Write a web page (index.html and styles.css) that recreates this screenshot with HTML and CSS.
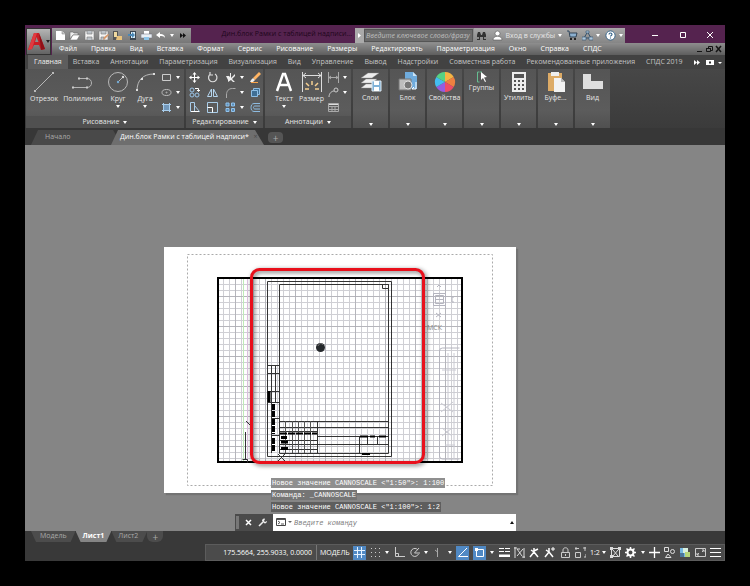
FILE: index.html
```html
<!DOCTYPE html>
<html lang="ru">
<head>
<meta charset="utf-8">
<title>Дин.блок Рамки с таблицей надписи</title>
<link rel="stylesheet" href="styles.css">
</head>
<body>
<div class="app">
  <header class="top">
    <button class="logo" aria-label="Меню приложения">
      <svg width="18" height="20" viewBox="0 0 18 20"><path d="M0 18 6 1h5l6 16-4 1-2-5H6l-2 4z" fill="#c81d25"/><path d="M7 10 8.500 5l2 5z" fill="#8d8d8d"/><path d="M6 1h3L4 17l-4 1z" fill="#e03a40"/><path d="m11 1 6 16-4 1z" fill="#8e1017"/></svg>
      <i class="caret dark"></i>
    </button>
    <div class="bars">
      <div class="titlebar">
        <div class="quick">
          <button aria-label="Создать"><svg class="i11" viewBox="0 0 11 11"><path d="M1 1h6l3 3v6H1z" fill="#fff"/><path d="M7 1v3h3" fill="#ccc" stroke="#777" stroke-width=".5"/></svg></button>
          <button aria-label="Открыть"><svg class="i11" viewBox="0 0 11 11"><path d="M1 9V2h3l1 1h4v2H4z" fill="#eee" stroke="#666" stroke-width=".6"/><path d="M1 10 4 5h7L8 10z" fill="#fff" stroke="#777" stroke-width=".6"/></svg></button>
          <button aria-label="Сохранить"><svg class="i11" viewBox="0 0 11 11"><path d="M1 1h9v9H1z" fill="#f4f4f4" stroke="#777" stroke-width=".6"/><path d="M3 1v3h5V1M3 10V7h5v3" fill="#bcc2c8" stroke="#777" stroke-width=".6"/></svg></button>
          <button aria-label="Сохранить как"><svg class="i11" viewBox="0 0 11 11"><path d="M1 1h9v9H1z" fill="#f4f4f4" stroke="#777" stroke-width=".6"/><path d="M3 1v3h5V1M3 10V7h3v3" fill="#bcc2c8" stroke="#777" stroke-width=".6"/><path d="m5 10 1-3 4-3 1 1-4 4z" fill="#d99a6c"/></svg></button>
          <button aria-label="Открыть с устройства"><svg class="i11" viewBox="0 0 11 11"><path d="M1 1h5v9H1z" fill="#555"/><path d="M2 2h3v5H2z" fill="#f0d9a0"/><path d="M5 6h5v4H4z" fill="#e9c27c"/></svg></button>
          <button aria-label="Сохранить на устройстве"><svg class="i11" viewBox="0 0 11 11"><path d="M3 1h6v9H3z" fill="#3b4650"/><path d="M4 2h4v6H4z" fill="#d8ecf7"/><path d="M1 4h4V2l3 3-3 3V6H1z" fill="#4a87b5"/></svg></button>
          <button aria-label="Печать"><svg class="i11" viewBox="0 0 11 11"><path d="M3 1h5v3H3z" fill="#fff"/><path d="M0 4h11v4H0z" fill="#e8eef3" stroke="#667" stroke-width=".5"/><path d="M3 7h5v3H3z" fill="#8ec5e8"/></svg></button>
          <button aria-label="Отменить"><svg class="i11" viewBox="0 0 11 11"><path d="m1 5 4-3v2c3 0 5 1 5 4-1-2-3-2-5-2v2z" fill="#fff"/></svg></button>
          <i class="caret"></i>
          <button aria-label="Ещё"><svg class="i11" viewBox="0 0 11 11"><path d="M3 3v5l3-2.500zM6 3v5l3-2.500z" fill="#111"/></svg></button>
        </div>
        <div class="doc-title">Дин.блок Рамки с таблицей надписи...</div>
        <div class="search">
          <span class="play"><svg width="5" height="7" viewBox="0 0 5 7"><path d="M1 1v5l3-2.500z" fill="#fff"/></svg></span>
          <input type="text" aria-label="Поиск" placeholder="Введите ключевое слово/фразу">
          <div class="account">
            <button aria-label="Найти"><svg class="i11" viewBox="0 0 11 11"><path d="M1 10V5l1-3h2l1 3h1l1-3h2l1 3v5H7V7H4v3z" fill="#333"/><path d="M2 7v2M9 7v2" stroke="#ddd"/></svg></button>
            <button><svg class="i11" viewBox="0 0 11 11"><circle cx="5.500" cy="3.500" r="2.500" fill="#fff" stroke="#555" stroke-width=".6"/><path d="M1 10c0-5 9-5 9 0z" fill="#fff" stroke="#555" stroke-width=".6"/></svg><span>Вход в службы</span><i class="caret"></i></button>
            <button aria-label="Магазин"><svg class="i11" viewBox="0 0 11 11"><path d="M0 1h2l1 6h6l1-4H3" fill="#8cb0cf" stroke="#26384a" stroke-width=".9"/><circle cx="4" cy="9" r="1"/><circle cx="8" cy="9" r="1"/></svg></button>
            <button aria-label="Приложения"><svg class="i11" viewBox="0 0 11 11"><path d="M5.500 2 2 8h7z" fill="none" stroke="#34536f"/><path d="M4 1h3v2H4zM0 7h4v3H0zM7 7h4v3H7z" fill="#adc6da" stroke="#34536f" stroke-width=".6"/></svg><i class="caret"></i></button>
            <button aria-label="Справка"><svg class="i11" viewBox="0 0 11 11"><circle cx="5.500" cy="5.500" r="4.600" fill="#fff" stroke="#2e5f86" stroke-width=".9"/><path d="M4 4.500c0-2 3-2 3 0 0 1-1.500 1-1.500 2M5.500 7.500v1" fill="none" stroke="#2e5f86" stroke-width="1.100"/></svg><i class="caret"></i></button>
          </div>
        </div>
        <div class="wincontrols">
          <button aria-label="Свернуть"><svg width="8" height="8" viewBox="0 0 8 8"><path d="M1 4.500h6" stroke="#fff"/></svg></button>
          <button aria-label="Развернуть"><svg width="8" height="8" viewBox="0 0 8 8"><path d="M1.500 1.500h5v5h-5z" fill="none" stroke="#fff"/></svg></button>
          <button aria-label="Закрыть"><svg width="8" height="8" viewBox="0 0 8 8"><path d="m1 1 6 6M7 1 1 7" stroke="#fff"/></svg></button>
        </div>
      </div>
      <nav class="menubar">
        <a href="#">Файл</a><a href="#">Правка</a><a href="#">Вид</a><a href="#">Вставка</a><a href="#">Формат</a><a href="#">Сервис</a><a href="#">Рисование</a><a href="#">Размеры</a><a href="#">Редактировать</a><a href="#">Параметризация</a><a href="#">Окно</a><a href="#">Справка</a><a href="#">СПДС</a>
        <svg class="mdi" width="26" height="8" viewBox="0 0 26 8" fill="none" stroke="#151515"><path d="M1 6.500h5M12.500 3V1.500h4v4H15M10.500 3.500h4v3h-4zM10 3.500h5" /><path d="m20 1 5 6M25 1l-5 6" stroke-width="1.500"/></svg>
      </nav>
    </div>
  </header>

  <nav class="ribbon-tabs">
    <a href="#" class="on">Главная</a><a href="#">Вставка</a><a href="#">Аннотации</a><a href="#">Параметризация</a><a href="#">Визуализация</a><a href="#">Вид</a><a href="#">Управление</a><a href="#">Вывод</a><a href="#">Надстройки</a><a href="#">Совместная работа</a><a href="#">Рекомендованные приложения</a><a href="#">СПДС 2019</a>
    <svg class="more" width="28" height="7" viewBox="0 0 28 7" fill="#fff"><path d="M0 1v5l3-2.500zM3 1v5l3-2.500zM12 1h8v5h-8zM24 3h4l-2 2z"/><path d="M15 2.500h2v2h-2z" fill="#333"/></svg>
  </nav>

  <div class="ribbon">
    <section class="panel draw">
      <div class="tools">
        <button class="big"><svg class="i22" viewBox="0 0 22 22" fill="none" stroke="#b8b8b8"><path d="M2 20 20 2"/><path d="M1 19h2v2H1zM19 1h2v2h-2z" fill="#bbb" stroke="none"/></svg>Отрезок</button>
        <button class="big"><svg class="i22" viewBox="0 0 22 22" fill="none" stroke="#b4b4b4"><path d="M1 16.500h14c6 0 6-9 0-9H7"/><path d="M0 15.500h2v2H0zM14 15.500h2v2h-2zM6 6.500h2v2H6zM14 6.500h2v2h-2z" fill="#ccc" stroke="none"/></svg>Полилиния</button>
        <button class="big"><svg class="i22" viewBox="0 0 22 22" fill="none" stroke="#b8b8b8"><circle cx="11" cy="11" r="9.500"/><path d="m11 11 5-5"/><circle cx="11" cy="11" r="1.200" fill="#74a8d0" stroke="none"/><circle cx="16" cy="6" r="1.200" fill="#ddd" stroke="none"/></svg>Круг<i class="caret"></i></button>
        <button class="big"><svg class="i22" viewBox="0 0 22 22" fill="none" stroke="#b8b8b8"><path d="M3 20C3 9 9 3 20 3"/><path d="M2 18h2v2H2zM7 7h2v2H7zM19 2h2v2h-2z" fill="#ddd" stroke="none"/></svg>Дуга<i class="caret"></i></button>
        <div class="mini one">
          <button aria-label="Прямоугольник"><svg class="i11" viewBox="0 0 11 11" fill="none" stroke="#ccc"><path d="M1.500 2.500h8v6h-8z"/></svg><i class="caret"></i></button>
          <button aria-label="Эллипс"><svg class="i11" viewBox="0 0 11 11" fill="none" stroke="#bbb"><ellipse cx="5.500" cy="5.500" rx="4.500" ry="3"/><circle cx="5.500" cy="5.500" r=".5"/></svg><i class="caret"></i></button>
          <button aria-label="Штриховка"><svg class="i11" viewBox="0 0 11 11" fill="#7298bb" stroke="#a8cdec"><path d="M2.500 2.500h6v6h-6zM1 2.500h9M1 8.500h9M2.500 1v9M8.500 1v9"/></svg><i class="caret"></i></button>
        </div>
      </div>
      <h2>Рисование <i class="caret"></i></h2>
    </section>

    <section class="panel edit">
      <div class="tools">
        <div class="mini four">
          <button aria-label="Перенести"><svg class="i11" viewBox="0 0 11 11" fill="#fff"><path d="M5 2h1v3h3v1H6v3H5V6H2V5h3z"/><path d="m5.500 0 2 2.500h-4zM5.500 11l2-2.500h-4zM0 5.500l2.500-2v4zM11 5.500l-2.500-2v4z"/></svg></button>
          <button aria-label="Повернуть"><svg class="i11" viewBox="0 0 11 11" fill="none" stroke="#ddd" stroke-width="1.200"><path d="M3.500 2a4.200 4.200 0 1 0 4.500 0M3 0v3h3"/></svg></button>
          <button aria-label="Обрезать"><svg class="i11" viewBox="0 0 11 11"><path d="m1 1 4 4V1h1v5l4-4v2L7 7l3 3H8L6 8l-3 2V8L1 4h3z" fill="#eee"/></svg><i class="caret"></i></button>
          <button aria-label="Стереть"><svg class="i11" viewBox="0 0 11 11"><path d="m3 6 6-6 2 2-6 6z" fill="#ffb463"/><path d="m1 8 2-2 2 2-2 2H0z" fill="#eee"/><path d="M1 10.500h7" stroke="#f9a349"/></svg></button>
          <button aria-label="Копировать"><svg class="i11" viewBox="0 0 11 11" fill="none" stroke="#9ac4e8"><circle cx="3" cy="3" r="2"/><circle cx="3" cy="8" r="2"/><circle cx="8" cy="8" r="2"/><path d="M6 1.500h3.500V4M8 3l1.500 1.500L11 3" stroke="#fff"/></svg></button>
          <button aria-label="Зеркало"><svg class="i11" viewBox="0 0 11 11" fill="none" stroke="#b5d5ee"><path d="M4.500 2v7.500h-4zM6.500 2v7.500h4z"/></svg></button>
          <button aria-label="Сопряжение"><svg class="i11" viewBox="0 0 11 11" fill="none" stroke="#aaa"><path d="M1.500 11V8c0-4 2-6.500 6-6.500h3"/></svg><i class="caret"></i></button>
          <button aria-label="Расчленить"><svg class="i11" viewBox="0 0 11 11" fill="#3f6e94" stroke="#8dbde4"><path d="M1.500 3.500h6v6h-6zM3.500 3V1.500h6v6H8"/></svg></button>
          <button aria-label="Растянуть"><svg class="i11" viewBox="0 0 11 11" fill="none" stroke="#a9cdea"><path d="M1.500.5h4v9h-4zM5.500 9.500h5l-5-6" /><path d="M2 9.500h8" stroke="#fff"/></svg></button>
          <button aria-label="Масштаб"><svg class="i11" viewBox="0 0 11 11" fill="none" stroke="#aacde8"><path d="M.5.500h10v10H.5z"/><path d="M.5 5.500h5v5" stroke="#fff"/></svg></button>
          <button aria-label="Массив"><svg class="i11" viewBox="0 0 11 11" fill="#5b8db8" stroke="#91c3ed"><path d="M1 1h3v3H1zM6.500 1h3v3h-3zM1 6.500h3v3H1zM6.500 6.500h3v3h-3z"/></svg><i class="caret"></i></button>
          <button aria-label="Подобие"><svg class="i11" viewBox="0 0 11 11" fill="none" stroke="#8dbbe0"><path d="M10 1.500H4c-4 0-4 8 0 8h6M10 4H5c-2 0-2 3 0 3h5"/></svg></button>
        </div>
      </div>
      <h2>Редактирование <i class="caret"></i></h2>
    </section>

    <section class="panel note">
      <div class="tools">
        <button class="big"><svg class="i22" viewBox="0 0 22 22" fill="none" stroke="#fff" stroke-width="2.500"><path d="m4 20 6-17h2l6 17M7 14h8"/></svg>Текст<i class="caret"></i></button>
        <button class="big"><svg class="i22" viewBox="0 0 22 22" fill="none" stroke="#ddd"><path d="M1.500 1v20M20.500 1v20M2 4.500h18M5 2 2 4.500 5 7M17 2l3 2.500L17 7"/><path d="M8 18H4M8 15l-3-3M11 14v-4M14 15l3-3M14 18h4" stroke="#f5cf91" stroke-width="1.500"/></svg>Размер</button>
        <div class="mini one">
          <button aria-label="Линейный"><svg class="i11" viewBox="0 0 11 11" fill="none" stroke="#aaa"><path d="M.5 0v11M10.500 0v11M1 5.500h9M3 4 1 5.500 3 7M8 4l2 1.500L8 7"/></svg><i class="caret"></i></button>
          <button aria-label="Выноска"><svg class="i11" viewBox="0 0 11 11" fill="none" stroke="#ccc"><path d="M1 10c0-4 3-6 5-6"/><circle cx="8" cy="3" r="2"/></svg><i class="caret"></i></button>
          <button aria-label="Таблица"><svg class="i11" viewBox="0 0 11 11" fill="none" stroke="#aaa"><path d="M.5 1.500h10v8H.5zM.5 4.500h10M.5 7.500h10M4 4v6M7 4v6"/><path d="M1 2.500h9" stroke="#ddd"/></svg></button>
        </div>
      </div>
      <h2>Аннотации <i class="caret"></i></h2>
    </section>

    <button class="group"><svg class="i22" viewBox="0 0 22 22"><path d="m1 7 7-5h11l-7 5zM1 12l5-4h11l-5 4zM1 17l5-4h10l-4 4z" fill="#eee" stroke="#888" stroke-width=".4"/><path d="M12 10h9v10h-9z" fill="#7fb2d8" stroke="#dfeaf2"/><path d="M14 10h5v4h-5zM14 16h5v4h-5z" fill="#fff"/></svg><span>Слои</span><i class="caret"></i></button>
    <button class="group"><svg class="i22" viewBox="0 0 22 22"><path d="M8 1h8l4 4v13H8z" fill="#6fabdc"/><path d="M16 1v4h4" fill="#cde4f5"/><path d="M2 8h12v11H2z" fill="#bdbdbd" stroke="#777"/><circle cx="11" cy="14" r="4" fill="#777" stroke="#ddd"/><path d="M19 11v7h-4l2-2" fill="none" stroke="#fff"/></svg><span>Блок</span><i class="caret"></i></button>
    <button class="group"><svg class="i22" viewBox="0 0 22 22"><path d="M11 11V1a10 10 0 0 1 8.700 5z" fill="#f6b443"/><path d="m11 11 8.700-5a10 10 0 0 1 0 10z" fill="#ef8040"/><path d="m11 11 8.700 5a10 10 0 0 1-8.700 5z" fill="#ee4c67"/><path d="M11 11v10a10 10 0 0 1-8.700-5z" fill="#955ce0"/><path d="m11 11-8.700 5a10 10 0 0 1 0-10z" fill="#43bdf1"/><path d="M11 11 2.300 6A10 10 0 0 1 11 1z" fill="#55d184"/></svg><span>Свойства</span><i class="caret"></i></button>
    <button class="group low"><svg width="12" height="12" viewBox="0 0 12 12"><path d="M3.500 1H1.500v10h2M6 1H4" fill="none" stroke="#65bd91"/><path d="m5 1 6 5-3 .5 2 4-1 .5-2-4-2 2z" fill="#fff"/></svg><span>Группы</span><i class="caret"></i></button>
    <button class="group"><svg class="i22" viewBox="0 0 22 22"><path d="M4 1h14v20H4z" fill="#eee"/><path d="M6 3h10v4H6zM6 9h2v2H6zM10 9h2v2h-2zM14 9h2v2h-2zM6 13h2v2H6zM10 13h2v2h-2zM14 13h2v2h-2zM6 17h2v2H6zM10 17h2v2h-2zM14 17h2v2h-2z" fill="#555"/></svg><span>Утилиты</span><i class="caret"></i></button>
    <button class="group"><svg class="i22" viewBox="0 0 22 22"><path d="M3 2h14v18H3z" fill="#ddab66"/><path d="M6 1h8v4H6z" fill="#eee"/><path d="M9 7h7l4 4v10H9z" fill="#f2f2f2"/><path d="M16 7v4h4" fill="#bbb"/></svg><span>Буфе...</span><i class="caret"></i></button>
    <button class="group"><svg class="i22" viewBox="0 0 22 22"><path d="M1 3h8v7h12v8H1z" fill="#dedede"/></svg><span>Вид</span><i class="caret"></i></button>
  </div>

  <nav class="file-tabs">
    <a href="#" class="start">Начало</a>
    <a href="#" class="on">Дин.блок Рамки с таблицей надписи* <span>×</span></a>
    <button aria-label="Новый чертёж">+</button>
  </nav>

  <main class="workspace">
    <svg class="paper" width="352" height="246" viewBox="164 247 352 246">
      <defs>
        <pattern id="grid" x="218" y="279" width="6" height="6" patternUnits="userSpaceOnUse"><path d="M5.500 0v6M0 5.500h6" stroke="#cfcfd4"/></pattern>
        <pattern id="major" x="218" y="279" width="30" height="30" patternUnits="userSpaceOnUse"><path d="M17.500 0v30M0 17.500h30" stroke="#a9a9b0" stroke-width=".7"/></pattern>
        <filter id="shade" x="-10%" y="-10%" width="120%" height="120%"><feGaussianBlur stdDeviation="2"/></filter>
      </defs>
      <path d="M164 247h352v246H164z" fill="#fff"/>
      <path d="M187.500 254.500h305v231h-305z" fill="none" stroke="#aaa" stroke-dasharray="2 2"/>
      <path d="M218 278h244v184H218z" fill="url(#grid)"/>
      <path d="M218 278h244v184H218z" fill="url(#major)"/>
      <path d="M243.500 279v182" stroke="#bfe9b8"/><path d="M247.500 279v182" stroke="#dfc4e2"/>
      <path d="M218 278h244v184H218z" fill="none" stroke="#000" stroke-width="2"/>
      <g fill="none" stroke="#333">
        <path d="M267.500 281.500h124v175h-124zM279.500 284.500h109v169h-109zM382.500 284.500h6v4h-6z"/>
        <path d="M267.500 365.500h12M267.500 373.500h12M267.500 391.500h12M267.500 402.500h12M271.500 365v88M275.500 365v37M272 418.500h7M272 435.500h7"/>
        <path d="M279 421.500h110M279 427.500h110M279 431.500h38M317 436.500h72M279 440.500h38M279 444.500h38M279 449.500h38M317.500 421v32M317 444.500h72M359.500 436v17M367.500 436v8M377.500 436v8"/>
        <path d="M285.500 421v32M292.500 421v32M298.500 421v32M304.500 421v32M310.500 421v32" stroke="#555"/>
        <path d="M245.500 432v28M242.500 459.500h5v3M246 421l5 5M251 426v5M278 454l7 7M285 454l-7 7"/>
      </g>
      <g stroke="#000" fill="none">
        <path d="M269 391v11" stroke-width="3"/>
        <path d="M273.500 404v13M273.500 419v15M273.500 438v14" stroke-width="3" stroke-dasharray="6 1"/>
        <path d="M280 433.500h37" stroke-width="2" stroke-dasharray="7 1"/>
        <path d="M281 437.500h6M281 442h7M281 448.500h7" stroke-width="3"/>
        <path d="M360 436.500h8M370 436.500h5M379 436.500h7M362 454h8" stroke-width="2"/>
      </g>
      <circle cx="320.500" cy="347.500" r="4.500" fill="#26292c"/><path d="M318 346c1-3 4-3 5-1" stroke="#777" fill="none"/>
      <g fill="none" stroke="#b4b4be">
        <path d="M433.500 293.500h12v12h-12zM435.500 295.500h8v8h-8zM436 299.500h7"/>
        <path d="m437 287 2-2 2 2M454 297h-2v5h2M436 313l5 4M441 313l-5 4"/>
        <path d="M439.500 351v105q0 3 3 3h17M439.500 351q0-3 3-3h17"/>
        <path d="M442 370h14M448 353v106M454 353v106M441 403l12 9M453 402l-12 10M442 428l10 8M452 428l-10 8M445 445h10" stroke="#cacad2"/>
      </g>
      <text class="wcs" x="427" y="330">МСК</text>
      <rect x="253" y="271" width="172" height="193" rx="8" fill="none" stroke="#000" stroke-opacity=".45" stroke-width="4" filter="url(#shade)"/>
      <rect x="251.500" y="269.500" width="172" height="193" rx="8" fill="none" stroke="#e90f1b" stroke-width="3"/>
    </svg>
    <div class="command">
      <div class="history">
        <p>Новое значение CANNOSCALE &lt;"1:50"&gt;: 1:100</p>
        <p>Команда: _CANNOSCALE</p>
        <p>Новое значение CANNOSCALE &lt;"1:100"&gt;: 1:2</p>
      </div>
      <div class="cmdline">
        <span class="grip"></span>
        <button aria-label="Закрыть"><svg width="7" height="7" viewBox="0 0 7 7"><path d="m1 1 5 5M6 1 1 6" stroke="#fff" stroke-width="1.500"/></svg></button>
        <button aria-label="Настройка"><svg width="9" height="9" viewBox="0 0 9 9"><path d="m1 8 4-4" stroke="#eee" stroke-width="1.600"/><path d="M4 3c0-2 2-3 3-2L6 3l1 1 2-1c0 2-2 3-3 2z" fill="#eee"/></svg></button>
        <div class="entry">
          <svg width="16" height="9" viewBox="0 0 16 9"><path d="M.5.500h9v7h-9z" fill="#fff" stroke="#444"/><path d="M.5 1.500h9M2 3l2 1.500L2 6M5 6h3" fill="none" stroke="#555"/><path d="M12 3h4l-2 2z" fill="#666"/></svg>
          <input type="text" aria-label="Команда" placeholder="Введите команду">
          <i class="caret up"></i>
        </div>
      </div>
    </div>
  </main>

  <nav class="sheets">
    <a href="#">Модель</a><a href="#" class="on">Лист1</a><a href="#">Лист2</a><button aria-label="Новый лист">+</button>
  </nav>

  <footer class="status">
    <span class="coords">175.5664, 255.9033, 0.0000</span>
    <button class="model">МОДЕЛЬ</button>
    <div class="toggles">
      <button class="lit" aria-label="Сетка"><svg class="i11" viewBox="0 0 11 11"><path d="M3.500 0v11M7.500 0v11M0 3.500h11M0 7.500h11" stroke="#e5f2ff"/></svg></button>
      <button aria-label="Шаг"><svg class="i11" viewBox="0 0 11 11" fill="none" stroke="#ccc" stroke-dasharray="1 3"><path d="M1 1.500h9M1 5.500h9M1 9.500h9"/></svg></button>
      <i class="caret"></i>
      <button aria-label="Орто"><svg class="i11" viewBox="0 0 11 11" fill="none" stroke="#ccc"><path d="M1.500 0v9.500H11M1 6.500h3.500V10"/></svg></button>
      <button aria-label="Полярное отслеживание"><svg class="i11" viewBox="0 0 11 11" fill="none" stroke="#ccc"><path d="M9 3a4 4 0 1 0 .5 4M5.500 6 10 1M5.500 6H11"/></svg></button>
      <i class="caret"></i>
      <button aria-label="Изометрия"><svg class="i11" viewBox="0 0 11 11" fill="none" stroke="#aaa"><path d="M5.500 1v9M3 3l2.500 2"/></svg></button>
      <i class="caret"></i>
      <button class="lit" aria-label="Отслеживание"><svg class="i11" viewBox="0 0 11 11" fill="none" stroke="#fff"><path d="M10 1 1.500 9.500H11"/></svg></button>
      <button class="lit" aria-label="Привязка"><svg class="i11" viewBox="0 0 11 11" fill="none" stroke="#fff"><path d="M2.500 2.500h7v7h-7z"/><path d="M1 1h3v3H1z" fill="#fff" stroke="none"/></svg></button>
      <i class="caret"></i>
      <button aria-label="Вес линий"><svg class="i11" viewBox="0 0 11 11" stroke="#fff"><path d="M0 1.500h5M6 1.500h5M0 4.500h5M6 4.500h5M0 8h11" /><path d="M0 9h11" stroke-width="2"/></svg></button>
      <button aria-label="Выбор"><svg class="i11" viewBox="0 0 11 11" fill="none" stroke="#ddd"><path d="M0 1h3M1 0v11M8 10h3M10 1v10M3 2l5 7M9 2 3 9M3 2h3"/></svg></button>
      <button aria-label="Аннотации"><svg class="i11" viewBox="0 0 11 11" stroke="#fff" stroke-width="1.500" fill="none"><path d="M5 1v4L1 10M5 5l4 5M5 4l4-2M5 5 2 3"/></svg></button>
      <button aria-label="Автомасштаб"><svg class="i11" viewBox="0 0 11 11" stroke="#fff" stroke-width="1.500" fill="none"><path d="M5 1v4L1 10M5 5l4 5M5 5 2 3"/><path d="M7 2h4M9 0v4" stroke-width="1"/></svg></button>
      <button aria-label="Блокировка"><svg class="i11" viewBox="0 0 11 11" fill="none" stroke="#ccc"><path d="M1.500 5.500h8v5h-8zM3 5V3c0-3 5-3 5 0v2M5.500 7v2"/></svg></button>
      <button aria-label="Видовой экран"><svg class="i11" viewBox="0 0 11 11" fill="none" stroke="#ccc"><path d="M1 0v3M0 1.500h4M.5 5.500h5v5h-5zM8 1h3M10 0v4M9 10h2V7"/></svg></button>
      <button class="scale">1:2<i class="caret"></i></button>
      <button aria-label="Синхронизация"><svg class="i11" viewBox="0 0 11 11" fill="none" stroke="#ddd"><path d="M1.500 1.500h8v8h-8zM3 3l5 6M8 3 3 9"/><path d="M0 0h3v3H0zM8 0h3v3H8zM0 8h3v3H0z" fill="#ddd" stroke="none"/></svg></button>
      <button aria-label="Параметры"><svg class="i11" viewBox="0 0 11 11" fill="none" stroke="#fff"><circle cx="5.500" cy="5.500" r="3" stroke-width="2"/><path d="M5.500 0v2M5.500 9v2M0 5.500h2M9 5.500h2M1.500 1.500 3 3M8 8l1.500 1.500M9.500 1.500 8 3M3 8 1.500 9.500" stroke-width="1.500"/></svg></button>
      <i class="caret"></i>
      <button aria-label="Монитор аннотаций"><svg class="i11" viewBox="0 0 11 11" stroke="#fff"><path d="M5.500 0v11M0 5.500h11" stroke-width="1.300"/></svg></button>
      <button aria-label="Изоляция"><svg class="i11" viewBox="0 0 11 11" fill="none" stroke="#ddd"><path d="M.5.500h4v4h-4z"/><circle cx="8.500" cy="4.500" r="2"/><path d="m4 7 3 3.500H1.500z"/></svg></button>
      <button aria-label="Графика"><svg class="i11" viewBox="0 0 11 11"><path d="M1 1h8v9H1z" fill="#76b9e2"/><path d="M4 1h5v5H4z" fill="#d9f1e0"/><path d="M6 5h5v5H6z" fill="#b7d77b"/><path d="M1 6h4v4H1z" fill="#4c779b"/></svg></button>
      <button aria-label="Очистить экран"><svg class="i11" viewBox="0 0 11 11" fill="none" stroke="#ccc"><path d="M.5 1.500h10v8H.5zM2 8l2-2M9 3 7 5M7 3h2v2M2 6v2h2"/></svg></button>
      <button aria-label="Адаптация"><svg class="i11" viewBox="0 0 11 11" stroke="#fff"><path d="M0 1.500h11M0 5.500h11M0 9.500h11"/></svg></button>
    </div>
  </footer>
</div>
</body>
</html>
```
FILE: styles.css
```css
* { box-sizing: border-box; }
body {
  margin: 0;
  padding: 25px;
  min-height: 100vh;
  background: #000;
  color: #e6e6e6;
  font: 7px/10px "Open Sans", "Noto Sans", sans-serif;
}
a { color: inherit; text-decoration: none; white-space: nowrap; }
button {
  display: flex;
  align-items: center;
  justify-content: center;
  padding: 0;
  border: 0;
  background: none;
  color: inherit;
  font: inherit;
}
svg { display: block; flex: none; }
.i11 { width: 11px; height: 11px; }
.i22 { width: 22px; height: 22px; }
.caret {
  flex: none;
  border: 2px solid transparent;
  border-top: 3px solid #fff;
  border-bottom: 0;
}
.caret.dark { border-top-color: #222; }
.caret.up { border-top: 0; border-bottom: 3px solid #111; }

.app { display: flex; flex-direction: column; min-height: calc(100vh - 50px); background: #393939; }

/* title and menu */
.top { display: flex; background: #55234f; }
.logo {
  width: 25px;
  margin: 3px 1px 0 1px;
  border: 1px solid #333;
  background: linear-gradient(#b4b4b4, #636363);
}
.bars { flex: 1; min-width: 0; }
.titlebar { display: flex; align-items: stretch; height: 18px; padding-top: 3px; }
.quick {
  display: flex;
  align-items: center;
  justify-content: space-between;
  width: 139px;
  padding: 0 3px;
  background: linear-gradient(#9a9a9a, #777);
}
.doc-title { flex: 1; padding: 1px 3px 0 0; color: #1e061b; text-align: right; white-space: nowrap; }
.search { display: flex; width: 270px; background: #8b8b8b; }
.play { display: flex; align-items: center; width: 9px; padding-left: 2px; background: #aaa; }
.search input {
  width: 109px;
  margin: 1px 1px 1px 0;
  padding: 0 1px;
  border: 1px solid #555;
  background: #6b6b6b;
  font: italic 7px/10px "Open Sans", sans-serif;
}
.search input::placeholder { color: #bebebe; opacity: 1; }
.account {
  flex: 1;
  display: flex;
  align-items: center;
  justify-content: space-between;
  padding: 0 2px;
  background: linear-gradient(#a9a9a9, #858585);
}
.account button { gap: 3px; white-space: nowrap; }
.wincontrols { display: flex; justify-content: space-between; width: 100px; padding: 0 11px 2px 26px; }
.menubar {
  display: flex;
  align-items: center;
  gap: 14px;
  height: 12px;
  padding: 0 3px 0 7px;
  background: linear-gradient(#8e8e8e, #5e5e5e);
  color: #fff;
}
.mdi { margin-left: auto; }

/* ribbon */
.ribbon-tabs { display: flex; align-items: center; gap: 11px; height: 14px; padding-right: 11px; background: #424242; color: #c4c4c4; }
.ribbon-tabs .on { margin: 0 -6px 0 3px; padding: 2px 6px; background: #5d5d5d; color: #eee; }
.more { margin-left: auto; }
.ribbon {
  display: flex;
  gap: 2px;
  height: 59px;
  padding-left: 1px;
  background: linear-gradient(#474747, #3b3b3b);
}
.panel, .group { background: linear-gradient(#555, #5c5c5c 70%, #505050); }
.panel { display: flex; flex-direction: column; justify-content: space-between; }
.panel h2 {
  display: flex;
  align-items: center;
  justify-content: center;
  gap: 4px;
  height: 12px;
  margin: 0;
  font: inherit;
  background: #505050;
}
.tools { display: flex; align-items: flex-start; padding-top: 2px; }
.big { flex-direction: column; gap: 1px; }
.draw { width: 158px; }
.edit { width: 77px; }
.note { width: 86px; }
.draw .tools { justify-content: space-between; padding-left: 4px; padding-right: 4px; }
.note .tools { justify-content: space-between; padding-left: 8px; padding-right: 4px; }
.mini { display: grid; row-gap: 4px; padding-top: 1px; }
.mini button { gap: 4px; justify-content: flex-start; }
.edit .tools { padding-left: 3px; }
.four { grid-template-columns: 18px 18px 25px 11px; }
.group {
  flex-direction: column;
  justify-content: flex-start;
  width: 35px;
  padding: 2px 0;
}
.group .caret { margin-top: auto; }

/* drawing tabs */
.file-tabs { display: flex; align-items: flex-end; height: 17px; background: #373737; color: #aaa; line-height: 14px; }
.file-tabs a { height: 15px; clip-path: polygon(7px 0, calc(100% - 9px) 0, 100% 100%, 0 100%); }
.file-tabs .start { width: 91px; margin-left: 6px; padding-left: 14px; background: #494949; }
.file-tabs .on { width: 153px; margin-left: -11px; padding-left: 9px; background: #6e6e6e; color: #fff; }
.file-tabs span { padding-left: 3px; color: #4a4a4a; }
.file-tabs button { width: 15px; height: 11px; margin: 0 0 2px 4px; border-radius: 4px; background: #555; font-size: 10px; }

.workspace { position: relative; flex: 1; min-height: 386px; padding: 102px 0 0 139px; background: #858585; }
.paper { box-shadow: 2px 2px 1px #737373; }
.wcs { fill: #888; font: 7px "Open Sans", sans-serif; }

/* command window floats over the sheet */
.command { position: absolute; left: 210px; bottom: 0; width: 281px; font: 7px/10px "Liberation Mono", monospace; }
.history { display: flex; flex-direction: column; align-items: flex-start; gap: 2px; padding: 0 0 2px 36px; }
.history p { margin: 0; padding: 0 1px; background: #757575; color: #fff; white-space: nowrap; }
.history p:first-child { background: #8f8f8f; }
.history p:last-child { background: #5e5e5e; }
.cmdline { display: flex; align-items: center; gap: 6px; height: 17px; background: #4a4a4a; }
.grip { width: 3px; height: 13px; margin-left: 1px; background: #777; }
.entry { flex: 1; display: flex; align-items: center; gap: 2px; height: 100%; padding: 0 2px 0 3px; background: #fff; }
.entry input { flex: 1; min-width: 0; padding: 0; border: 0; background: none; font: italic 7px/10px "Liberation Mono", monospace; }
.entry input::placeholder { color: #808080; opacity: 1; }

/* sheet tabs */
.sheets { display: flex; height: 13px; padding-left: 6px; color: #aaa; }
.sheets a { height: 11px; padding: 0 9px; background: #4c4c4c; clip-path: polygon(0 0, 100% 0, calc(100% - 5px) 100%, 5px 100%); }
.sheets .on { padding: 0 7px; background: #858585; color: #fff; font-weight: 700; }
.sheets a:nth-child(3) { padding-left: 7px; }
.sheets button { width: 16px; height: 11px; background: #4c4c4c; font-size: 10px; border-radius: 0 0 6px 6px; }

/* status bar */
.status { display: flex; align-items: center; height: 17px; margin-left: 180px; padding-right: 3px; border: 1px solid #5c5c5c; background: #4b4b4b; color: #fff; }
.coords { width: 110px; padding-right: 4px; text-align: right; white-space: nowrap; }
.model { height: 15px; padding: 0 3px; border-left: 1px solid #777; }
.toggles { flex: 1; display: flex; align-items: center; justify-content: space-between; }
.lit { width: 13px; height: 14px; background: #5089c4; }
.scale { gap: 2px; }
```
